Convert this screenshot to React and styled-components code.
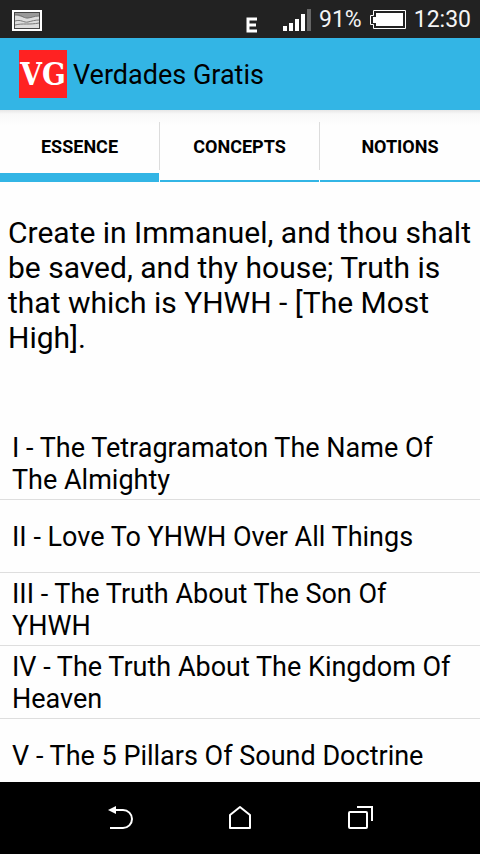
import React, { useState } from 'react'
import styled, { createGlobalStyle } from 'styled-components'

const GlobalStyle = createGlobalStyle`
  * {
    box-sizing: border-box;
  }
  body {
    margin: 0;
    background: #fefefe;
    color: #000;
    font-family: Roboto, 'Liberation Sans', sans-serif;
  }
`

const Screen = styled.div`
  display: flex;
  flex-direction: column;
  height: 100vh;
  overflow: hidden;
`

const StatusBar = styled.div`
  display: flex;
  flex: none;
  align-items: center;
  justify-content: space-between;
  height: 38px;
  padding: 2px 9px 0 12px;
  background: #222;
  color: #f4f4f4;
  font-size: 23px;
  line-height: 36px;

  svg {
    display: block;
  }
`

const StatusGroup = styled.div`
  display: flex;
  align-items: center;
  gap: 8px;
`

const Network = styled.div`
  display: flex;
  align-items: center;
  gap: 26px;
`

const AppBar = styled.header`
  display: flex;
  flex: none;
  align-items: center;
  gap: 6px;
  height: 72px;
  padding: 0 19px;
  background: #33b5e5;
`

const Logo = styled.div`
  display: flex;
  align-items: center;
  justify-content: center;
  width: 48px;
  height: 48px;
  background: #ff2222;
  color: #fff;
  font-family: 'DejaVu Serif Condensed', 'DejaVu Serif', serif;
  font-size: 31px;
  font-weight: 700;
`

const Title = styled.h1`
  margin: 0;
  padding-top: 2px;
  font-size: 27px;
  font-weight: 400;
  line-height: 32px;
`

const Tabs = styled.nav`
  display: grid;
  flex: none;
  grid-template-columns: repeat(3, 1fr);
  height: 72px;
  background: linear-gradient(#e6e6e6, #f8f8f8 4px, #fefefe 16px);
`

const Tab = styled.button`
  position: relative;
  padding: ${({ $active }) => ($active ? '10px 0 0' : '3px 0 0')};
  border: 0;
  border-bottom: ${({ $active }) => ($active ? '9px' : '2px')} solid #33b5e5;
  background: transparent;
  color: #000;
  font-family: inherit;
  font-size: 18px;
  font-weight: 700;
  line-height: 21px;
  text-transform: uppercase;

  &:not(:last-child) {
    margin-right: 1px;
  }

  &:not(:last-child)::after {
    content: '';
    position: absolute;
    top: 12px;
    right: -1px;
    width: 1px;
    height: 48px;
    background: #dcdcdc;
  }
`

const Content = styled.main`
  flex: 1;
  min-height: 0;
  overflow: hidden;
`

const Verse = styled.p`
  margin: 0;
  padding: 33px 8px 72px;
  font-size: 30px;
  line-height: 35px;
`

const List = styled.ul`
  margin: 0;
  padding: 0;
  list-style: none;
`

const Item = styled.li`
  border-bottom: 1px solid #dedede;
`

const ItemLink = styled.a`
  display: flex;
  align-items: center;
  min-height: 72px;
  padding: 2px 12px 0;
  color: inherit;
  font-size: 27px;
  line-height: 32px;
  text-decoration: none;
`

const NavBar = styled.footer`
  display: flex;
  flex: none;
  align-items: center;
  justify-content: center;
  gap: 72px;
  height: 72px;
  background: #000;
`

const NavButton = styled.button`
  display: flex;
  align-items: center;
  justify-content: center;
  width: 48px;
  height: 48px;
  padding: 0;
  border: 0;
  background: transparent;
  color: #fff;
`

const PictureIcon = () => (
  <svg width="30" height="21" viewBox="0 0 30 21">
    <rect width="30" height="21" fill="#fff" />
    <rect x="2.5" y="2.5" width="25" height="16" fill="#ddd" stroke="#444" />
    <path d="M3 3h24v3c-6 0-8 3-13 2S7 6 3 5z" fill="#999" />
    <path d="M3 5c6-1 8 3 12 3s7-2 12-2M3 11c6-2 9 2 13 1s7-2 11-2M3 15c8-2 14 0 24-2" fill="none" stroke="#777" />
  </svg>
)

const EdgeIcon = () => (
  <svg width="11" height="28" viewBox="0 0 11 28">
    <path d="M11 13H2v12h9M2 19h8" fill="none" stroke="#fff" strokeWidth="3" />
  </svg>
)

const SignalIcon = () => (
  <svg width="28" height="22" viewBox="0 0 28 22">
    <path d="M0 17h4v5H0zM6 14h4v8H6zM12 10h4v12h-4zM18 5h4v17h-4z" fill="#fff" />
    <path d="M24 0h4v22h-4z" fill="#666" />
  </svg>
)

const BatteryIcon = () => (
  <svg width="36" height="20" viewBox="0 0 36 20">
    <path d="M3.5 .5h32v18h-32v-4h-3v-9h3z" fill="none" stroke="#fff" />
    <path d="M6 3h27v13H6v-3H3V7h3z" fill="#fff" />
  </svg>
)

const BackIcon = () => (
  <svg width="26" height="26" viewBox="0 0 26 26" fill="none" stroke="currentColor" strokeWidth="2">
    <path d="M8 5h8a9 9 0 0 1 0 18H3" />
    <path d="M1 5l8-4v8z" fill="currentColor" stroke="none" />
  </svg>
)

const HomeIcon = () => (
  <svg width="26" height="26" viewBox="0 0 26 26" fill="none" stroke="currentColor" strokeWidth="2" strokeLinejoin="round">
    <path d="M3 10l10-8 10 8v13H3z" />
  </svg>
)

const RecentIcon = () => (
  <svg width="26" height="26" viewBox="0 0 26 26" fill="none" stroke="currentColor" strokeWidth="2">
    <rect x="2" y="7" width="18" height="16" rx="1" />
    <path d="M10 2h15v14" />
  </svg>
)

const tabs = ['Essence', 'Concepts', 'Notions']

const topics = [
  'I - The Tetragramaton The Name Of The Almighty',
  'II - Love To YHWH Over All Things',
  'III - The Truth About The Son Of YHWH',
  'IV - The Truth About The Kingdom Of Heaven',
  'V - The 5 Pillars Of Sound Doctrine',
]

const App = () => {
  const [active, setActive] = useState('Essence')

  return (
    <Screen>
      <GlobalStyle />
      <StatusBar>
        <PictureIcon />
        <StatusGroup>
          <Network>
            <EdgeIcon />
            <SignalIcon />
          </Network>
          <span>91%</span>
          <BatteryIcon />
          <span>12:30</span>
        </StatusGroup>
      </StatusBar>

      <AppBar>
        <Logo>VG</Logo>
        <Title>Verdades Gratis</Title>
      </AppBar>

      <Tabs>
        {tabs.map((tab) => (
          <Tab key={tab} $active={tab === active} onClick={() => setActive(tab)}>
            {tab}
          </Tab>
        ))}
      </Tabs>

      <Content>
        <Verse>
          Create in Immanuel, and thou shalt be saved, and thy house; Truth is
          that which is YHWH - [The Most High].
        </Verse>
        <List>
          {topics.map((topic) => (
            <Item key={topic}>
              <ItemLink href="#">{topic}</ItemLink>
            </Item>
          ))}
        </List>
      </Content>

      <NavBar>
        <NavButton aria-label="Back"><BackIcon /></NavButton>
        <NavButton aria-label="Home"><HomeIcon /></NavButton>
        <NavButton aria-label="Recent apps"><RecentIcon /></NavButton>
      </NavBar>
    </Screen>
  )
}

export default App
